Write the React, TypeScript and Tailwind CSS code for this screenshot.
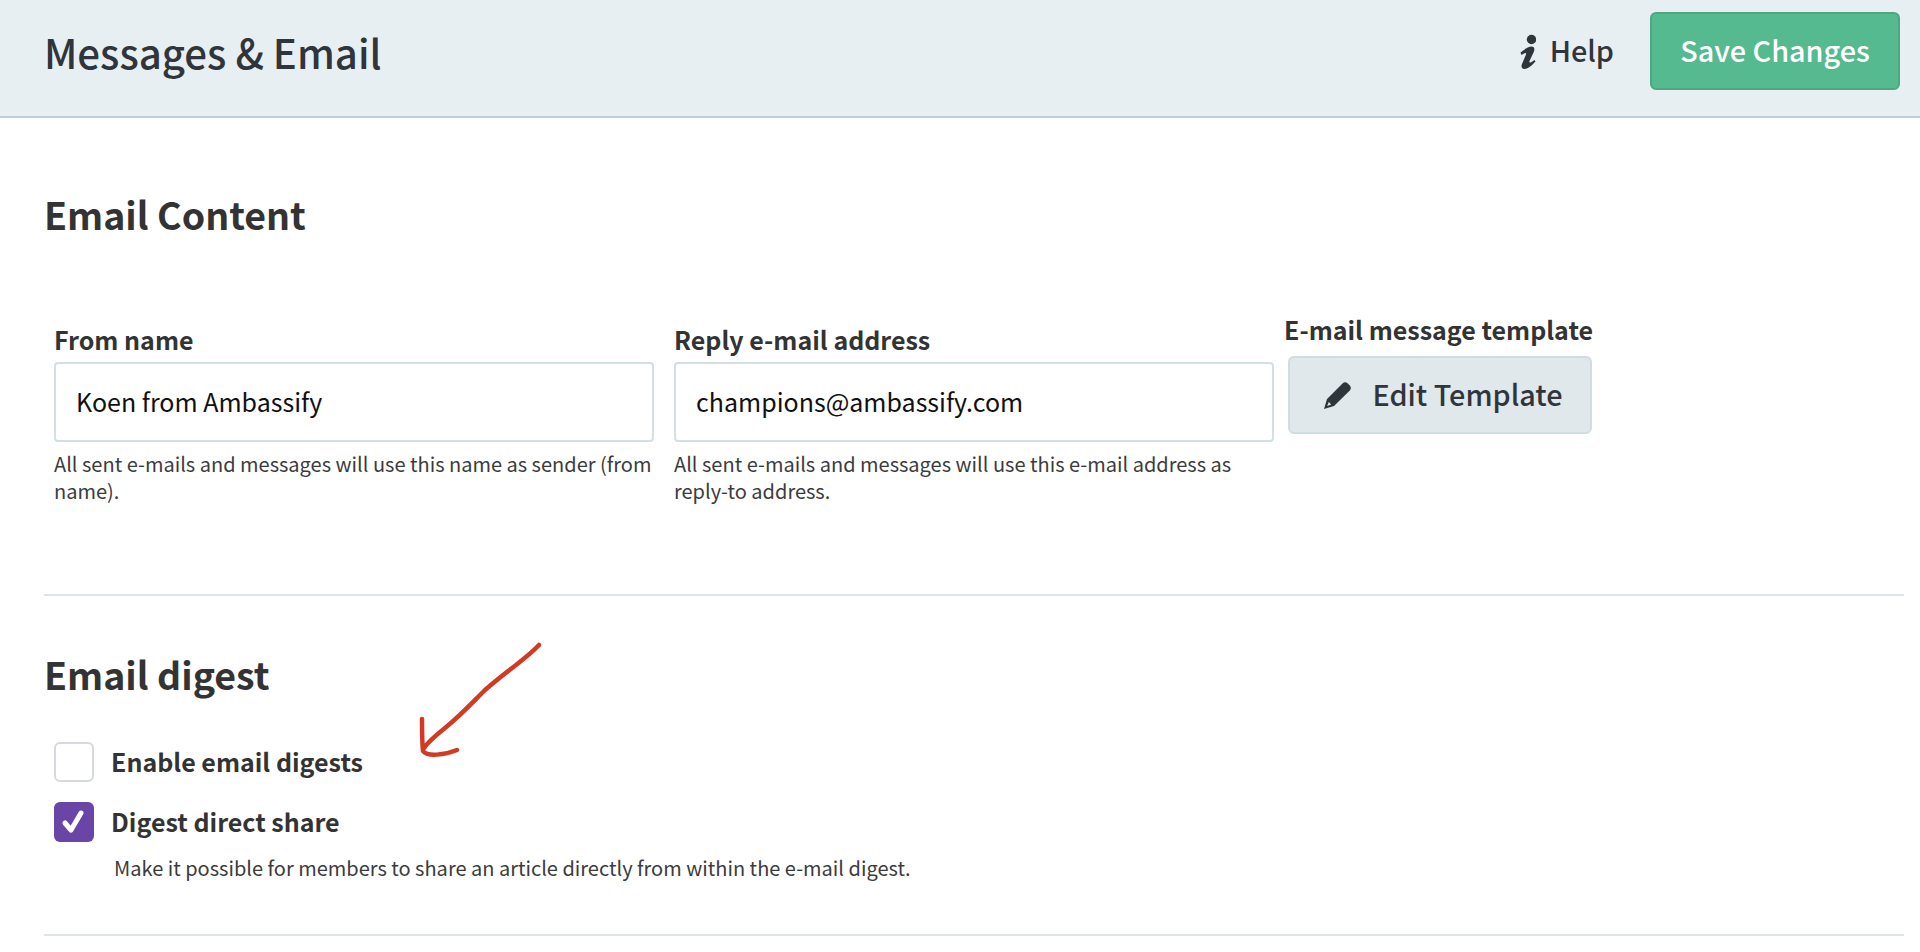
const font = "font-['Noto_Sans_CJK_SC','Source_Sans_Pro',sans-serif]";

function Field({ label, value, help, className }: { label: string; value: string; help: string; className: string }) {
  return (
    <div className={className}>
      <label className="block text-[25px] leading-[32px] font-bold text-[#333333] mb-[7px]">{label}</label>
      <input
        readOnly
        value={value}
        className="block w-full h-[80px] border-2 border-[#d3dfe3] rounded-[4px] pl-[20px] pb-[3px] text-[25px] text-[#111111] bg-white outline-none"
      />
      <p className="mt-[8px] text-[20px] leading-[27px] text-[#3c3c3c]">{help}</p>
    </div>
  );
}

export default function App() {
  return (
    <div className={`${font} min-h-[952px] bg-white overflow-hidden`}>
      <header className="h-[118px] bg-[#e8eff3] border-b-2 border-[#bccfd8] flex items-center pl-[44px] pr-[20px] pb-[14px]">
        <h1 className="mt-[2px] text-[40.2px] leading-[56px] font-medium text-[#30353c] flex-1">Messages &amp; Email</h1>
        <a className="flex items-center text-[28.8px] font-medium text-[#30353c] mr-[36px] -mt-[2px]">
          <svg className="mr-[14px] mt-[2px]" width="16" height="35" viewBox="0 0 16 35" fill="#30353c">
            <circle cx="11.5" cy="5.5" r="4.7" />
            <path d="M0.5 18.5 C4 15.5 8 12.5 11.5 12.5 C14.5 12.5 14.8 15 14 17.5 L9.5 27 C9 28.5 10 29 11.5 28 L14.5 26 L15.5 27.5 C12 31 8.5 35 4.5 35 C1.5 35 1 32.5 2 30 L6 20.5 C6.5 19 5.5 18.5 4 19.5 L1.5 21 Z" />
          </svg>
          Help
        </a>
        <button className="w-[250px] h-[78px] pb-[2px] bg-[#56ba90] border-2 border-[#4ea683] rounded-[6px] text-white text-[28.8px] font-medium">
          Save Changes
        </button>
      </header>
      <main className="pl-[44px] pr-[16px]">
        <h2 className="mt-[70px] text-[37.5px] leading-[52px] font-bold text-[#333333]">Email Content</h2>
        <div className="flex items-start mt-[83px] pl-[10px]">
          <Field
            className="w-[600px]"
            label="From name"
            value="Koen from Ambassify"
            help="All sent e-mails and messages will use this name as sender (from name)."
          />
          <Field
            className="w-[600px] ml-[20px]"
            label="Reply e-mail address"
            value="champions@ambassify.com"
            help="All sent e-mails and messages will use this e-mail address as reply-to address."
          />
          <div className="ml-[10px] -mt-[10px]">
            <div className="text-[25px] leading-[32px] font-bold text-[#333333] mb-[11px]">E-mail message template</div>
            <button className="ml-[4px] w-[304px] h-[78px] pl-[7px] pb-[2px] bg-[#e1e8ec] border-2 border-[#cfdce2] rounded-[6px] flex items-center justify-center text-[28.8px] font-medium text-[#30353c]">
              <svg className="mr-[21px] mt-[2px]" width="27" height="27" viewBox="0 0 27 27" fill="#30353c" fillRule="evenodd">
                <path d="M18.5 1.5 C20 0 22 0 23.5 1.2 L25.8 3.5 C27.2 5 27.2 7 25.8 8.5 L10 24 L0 27 L3 17 Z M4.8 20 L3.2 24 L7.2 22.6 Z" />
              </svg>
              Edit Template
            </button>
          </div>
        </div>
        <hr className="mt-[90px] border-0 border-t-2 border-[#dde3e7]" />
        <div className="relative">
          <h2 className="mt-[52px] text-[37.5px] leading-[52px] font-bold text-[#333333]">Email digest</h2>
          <svg className="absolute left-[326px] -top-[14px] pointer-events-none" width="190" height="130" viewBox="370 634 190 130" fill="none">
            <path
              d="M539 645 C525 660 510 668 485 690 C470 705 460 716 445 728 C435 736 428 742 424 748 M422 719 C422 730 422 742 423 751 C427 757 445 755 457 750"
              stroke="#d13b24"
              strokeWidth="4.5"
              strokeLinecap="round"
              strokeLinejoin="round"
            />
          </svg>
          <div className="pl-[10px] mt-[42px]">
            <div className="flex items-center h-[40px]">
              <span className="w-[40px] h-[40px] border-2 border-[#d6d9df] rounded-[6px] bg-white" />
              <span className="ml-[17px] text-[25px] font-bold text-[#333333]">Enable email digests</span>
            </div>
            <div className="flex items-center h-[40px] mt-[20px]">
              <span className="w-[40px] h-[40px] rounded-[6px] bg-[#6a45a5] flex items-center justify-center">
                <svg width="26" height="26" viewBox="0 0 26 26" fill="none">
                  <path d="M4 14 L10 21 L20 4" stroke="white" strokeWidth="5" strokeLinecap="round" strokeLinejoin="round" />
                </svg>
              </span>
              <span className="ml-[17px] text-[25px] font-bold text-[#333333]">Digest direct share</span>
            </div>
            <p className="mt-[12px] ml-[60px] text-[20px] leading-[27px] text-[#3c3c3c]">
              Make it possible for members to share an article directly from within the e-mail digest.
            </p>
          </div>
        </div>
        <hr className="mt-[53px] border-0 border-t-2 border-[#dde3e7]" />
      </main>
    </div>
  );
}
